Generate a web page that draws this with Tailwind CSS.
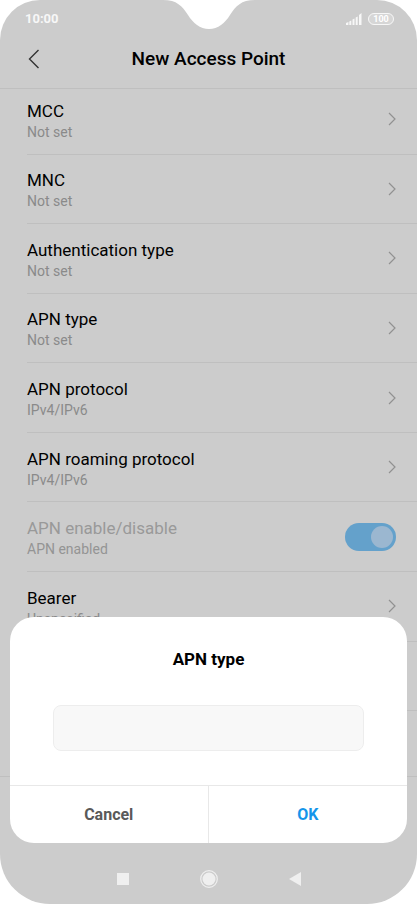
<!DOCTYPE html>
<html lang="en">

<head>
    <meta charset="UTF-8">
    <meta name="viewport" content="width=device-width, initial-scale=1.0">
    <title>New Access Point</title>
    <script src="https://cdn.jsdelivr.net/npm/@tailwindcss/browser@4"></script>
</head>

<body class="bg-white font-['Roboto',sans-serif]">
    <!-- Shared list chevron -->
    <svg class="hidden">
        <symbol id="chevron" viewBox="0 0 8 14">
            <path d="M1 1l6 6-6 6" fill="none" stroke="#919191" stroke-width="1.2" />
        </symbol>
    </svg>

    <div class="relative flex min-h-screen flex-col overflow-hidden rounded-t-[40px] rounded-b-[50px] bg-[#cccccc]">
        <!-- Camera notch -->
        <svg class="absolute top-0 left-1/2 h-[30px] w-[92px] -translate-x-1/2" viewBox="0 0 92 30">
            <path d="M0 0C14 0 19 6 25 15C30 23 37 29 46 29C55 29 62 23 67 15C73 6 78 0 92 0Z" fill="#fff" />
        </svg>

        <!-- Status bar + title -->
        <header class="h-[89px] border-b border-[#bfbfbf]">
            <div class="flex h-[37px] items-center justify-between pr-[23px] pl-[25px]">
                <span class="text-[13px] font-bold text-[#f7f7f7]">10:00</span>
                <div class="flex items-center gap-[6px]">
                    <svg class="h-3 w-4" viewBox="0 0 16 12" fill="#f7f7f7">
                        <path d="M0 12V10L2.400 9V12ZM3.300 8.400L5.300 7.400V12H3.300ZM6.500 6.500L8.500 5.500V12H6.500ZM9.700 4.500L11.700 3.500V12H9.700ZM13 2L15.500 0V12H13Z" />
                    </svg>
                    <span class="flex h-3 w-[26px] items-center justify-center rounded-full border border-[#f7f7f7] bg-[#d6d6d6] text-[9px] leading-[10px] font-bold text-white">100</span>
                </div>
            </div>
            <div class="grid grid-cols-[50px_1fr_50px] items-center">
                <button type="button" aria-label="Back" class="flex h-11 items-center pl-7">
                    <svg class="h-5 w-3" viewBox="0 0 12 20">
                        <path d="M10.500 1L1.500 10l9 9" fill="none" stroke="#333" stroke-width="1.400" />
                    </svg>
                </button>
                <h1 class="text-center text-[19px] leading-7 font-medium text-black">New Access Point</h1>
            </div>
        </header>

        <!-- Settings list -->
        <ul class="-mt-1 flex flex-1 flex-col pl-[27px]">
            <li class="flex grow basis-16 border-b border-[#bfbfbf]">
                <button type="button" class="flex flex-1 items-center justify-between pr-[21px] text-left">
                    <span class="pt-[3px]">
                        <span class="block text-[17px] leading-[22px] text-black">MCC</span>
                        <span class="block text-sm text-[#8a8a8a]">Not set</span>
                    </span>
                    <svg class="h-[14px] w-2"><use href="#chevron" /></svg>
                </button>
            </li>
            <li class="flex grow basis-16 border-b border-[#bfbfbf]">
                <button type="button" class="flex flex-1 items-center justify-between pr-[21px] text-left">
                    <span class="pt-[3px]">
                        <span class="block text-[17px] leading-[22px] text-black">MNC</span>
                        <span class="block text-sm text-[#8a8a8a]">Not set</span>
                    </span>
                    <svg class="h-[14px] w-2"><use href="#chevron" /></svg>
                </button>
            </li>
            <li class="flex grow basis-16 border-b border-[#bfbfbf]">
                <button type="button" class="flex flex-1 items-center justify-between pr-[21px] text-left">
                    <span class="pt-[3px]">
                        <span class="block text-[17px] leading-[22px] text-black">Authentication type</span>
                        <span class="block text-sm text-[#8a8a8a]">Not set</span>
                    </span>
                    <svg class="h-[14px] w-2"><use href="#chevron" /></svg>
                </button>
            </li>
            <li class="flex grow basis-16 border-b border-[#bfbfbf]">
                <button type="button" class="flex flex-1 items-center justify-between pr-[21px] text-left">
                    <span class="pt-[3px]">
                        <span class="block text-[17px] leading-[22px] text-black">APN type</span>
                        <span class="block text-sm text-[#8a8a8a]">Not set</span>
                    </span>
                    <svg class="h-[14px] w-2"><use href="#chevron" /></svg>
                </button>
            </li>
            <li class="flex grow basis-16 border-b border-[#bfbfbf]">
                <button type="button" class="flex flex-1 items-center justify-between pr-[21px] text-left">
                    <span class="pt-[3px]">
                        <span class="block text-[17px] leading-[22px] text-black">APN protocol</span>
                        <span class="block text-sm text-[#8a8a8a]">IPv4/IPv6</span>
                    </span>
                    <svg class="h-[14px] w-2"><use href="#chevron" /></svg>
                </button>
            </li>
            <li class="flex grow basis-16 border-b border-[#bfbfbf]">
                <button type="button" class="flex flex-1 items-center justify-between pr-[21px] text-left">
                    <span class="pt-[3px]">
                        <span class="block text-[17px] leading-[22px] text-black">APN roaming protocol</span>
                        <span class="block text-sm text-[#8a8a8a]">IPv4/IPv6</span>
                    </span>
                    <svg class="h-[14px] w-2"><use href="#chevron" /></svg>
                </button>
            </li>
            <li class="flex grow basis-16 items-center justify-between border-b border-[#bfbfbf] pr-[21px]">
                <label for="apnEnabled" class="pt-[3px]">
                    <span class="block text-[17px] leading-[22px] text-[#999999]">APN enable/disable</span>
                    <span class="block text-sm text-[#949494]">APN enabled</span>
                </label>
                <input type="checkbox" id="apnEnabled" checked disabled
                    class="flex h-7 w-[51px] appearance-none items-center justify-end rounded-full bg-[#64a1cb] pr-[3px] before:size-[22px] before:rounded-full before:bg-[#9bb7d0]">
            </li>
            <li class="flex grow basis-16 border-b border-[#bfbfbf]">
                <button type="button" class="flex flex-1 items-center justify-between pr-[21px] text-left">
                    <span class="pt-[3px]">
                        <span class="block text-[17px] leading-[22px] text-black">Bearer</span>
                        <span class="block text-sm text-[#8a8a8a]">Unspecified</span>
                    </span>
                    <svg class="h-[14px] w-2"><use href="#chevron" /></svg>
                </button>
            </li>
            <li class="grow basis-16 border-b border-[#bfbfbf]"></li>
            <li class="h-[65px]"></li>
        </ul>

        <!-- Android navigation -->
        <footer class="flex h-32 items-end justify-center border-t border-[#bfbfbf] pb-4">
            <button type="button" aria-label="Recent apps" class="flex h-[18px] w-[86px] items-center justify-center">
                <span class="size-3 bg-[#efefef]"></span>
            </button>
            <button type="button" aria-label="Home" class="flex h-[18px] w-[86px] items-center justify-center">
                <svg class="size-[18px]" viewBox="0 0 18 18">
                    <circle cx="9" cy="9" r="8.300" fill="none" stroke="#efefef" stroke-width="1.200" />
                    <circle cx="9" cy="9" r="6.500" fill="#efefef" />
                </svg>
            </button>
            <button type="button" aria-label="Back" class="flex h-[18px] w-[86px] items-center justify-center">
                <svg class="h-[14px] w-3" viewBox="0 0 12 14">
                    <path d="M12 0v14L0 7z" fill="#efefef" />
                </svg>
            </button>
        </footer>

        <!-- APN type dialog -->
        <form role="dialog" aria-labelledby="dialogTitle"
            class="absolute inset-x-[10px] bottom-[61px] overflow-hidden rounded-3xl bg-white">
            <h2 id="dialogTitle" class="pt-[30px] text-center text-[17px] leading-6 font-bold text-black">APN type</h2>
            <div class="px-[43px] py-[34px]">
                <input type="text" aria-labelledby="dialogTitle"
                    class="block h-[46px] w-full rounded-lg border border-[#ededed] bg-[#f8f8f8] px-3 text-base outline-none">
            </div>
            <div class="grid grid-cols-2 divide-x divide-[#e8e8e8] border-t border-[#e8e8e8]">
                <button type="button" class="h-[57px] text-base font-bold text-[#595959]">Cancel</button>
                <button type="submit" class="h-[57px] text-base font-bold text-[#1495ea]">OK</button>
            </div>
        </form>
    </div>
</body>

</html>
